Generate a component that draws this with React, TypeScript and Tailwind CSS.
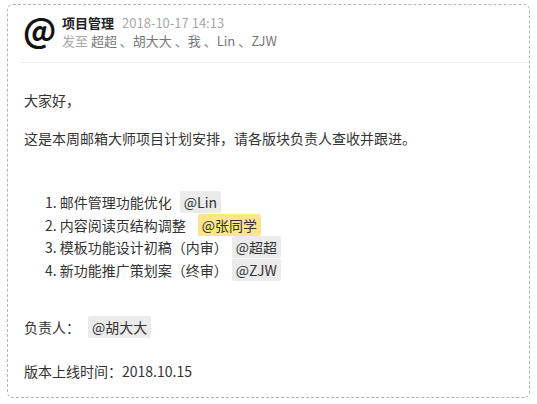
const FONT = { fontFamily: '"Noto Sans CJK SC", "Liberation Sans", sans-serif' }

const TASKS: { text: string; who: string; hot?: boolean; gap: string }[] = [
  { text: '邮件管理功能优化', who: '@Lin', gap: 'ml-[8px]' },
  { text: '内容阅读页结构调整', who: '@张同学', hot: true, gap: 'ml-[12px]' },
  { text: '模板功能设计初稿（内审）', who: '@超超', gap: 'ml-[4px]' },
  { text: '新功能推广策划案（终审）', who: '@ZJW', gap: 'ml-[4px]' },
]

function Mention({ name, hot }: { name: string; hot?: boolean }) {
  return (
    <span className={`rounded-[2px] px-[4px] py-[1px] ${hot ? 'bg-[#fde58c]' : 'bg-[#ebebeb]'}`}>
      {name}
    </span>
  )
}

export default function App() {
  return (
    <div className="h-[404px] w-[537px] bg-white pl-[7px] pt-[4px]" style={FONT}>
      <div className="flex h-[394px] w-[523px] flex-col rounded-[6px] border border-dashed border-[#b5b5b5]">
        <div className="ml-[11px] flex h-[58px] items-start border-b border-[#ececec] pt-[9px]">
          <span className="ml-[4px] mt-[-2px] w-[39px] text-[33px] font-bold leading-[34px] text-[#111]">@</span>
          <div className="flex flex-col">
            <div className="flex items-baseline gap-[8px] text-[13px] leading-[18px]">
              <span className="font-bold text-[#222]">项目管理</span>
              <span className="text-[#aaa]">2018-10-17 14:13</span>
            </div>
            <div className="text-[13px] leading-[18px] text-[#777]">
              <span className="text-[#aaa]">发至</span> 超超 、胡大大 、我 、Lin 、ZJW
            </div>
          </div>
        </div>

        <div className="pl-[16px] text-[14px] leading-[22.5px] text-[#333]">
          <p className="mt-[26px]">大家好，</p>
          <p className="mt-[15.5px]">这是本周邮箱大师项目计划安排，请各版块负责人查收并跟进。</p>

          <ol className="mt-[41.5px] pl-[21px]">
            {TASKS.map((t, i) => (
              <li key={t.who}>
                {i + 1}. {t.text}
                <span className={t.gap}>
                  <Mention name={t.who} hot={t.hot} />
                </span>
              </li>
            ))}
          </ol>

          <p className="mt-[35px]">
            负责人：<span className="ml-[8px]"><Mention name="@胡大大" /></span>
          </p>
          <p className="mt-[21.5px]">版本上线时间：2018.10.15</p>
        </div>
      </div>
    </div>
  )
}
